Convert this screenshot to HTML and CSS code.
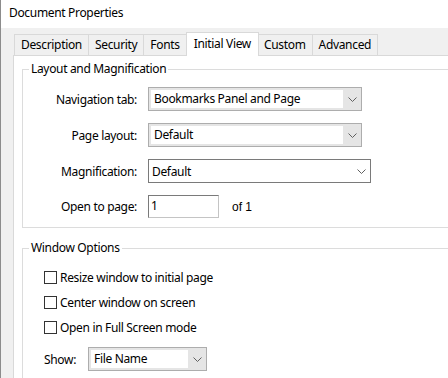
FILE: index.html
```html
<!DOCTYPE html>
<html>
<head>
<meta charset="utf-8">
<link rel="stylesheet" href="styles.css">
</head>
<body>
<div class="window">
  <div class="titlebar">Document Properties</div>
  <div class="client">
    <div class="tabs">
      <div class="tab">Description</div>
      <div class="tab">Security</div>
      <div class="tab">Fonts</div>
      <div class="tab active">Initial View</div>
      <div class="tab">Custom</div>
      <div class="tab">Advanced</div>
    </div>
    <div class="panel">
      <fieldset class="group group-layout">
        <legend>Layout and Magnification</legend>
        <div class="form">
          <div class="label">Navigation tab:</div>
          <div class="combo combo-wide">
            <div class="combo-field">Bookmarks Panel and Page</div>
            <div class="combo-btn"><svg width="9" height="5" viewBox="0 0 9 5"><path d="M0.5 0.5 L4.5 4.5 L8.5 0.5" fill="none" stroke="#606060" stroke-width="1"/></svg></div>
          </div>
          <div class="label">Page layout:</div>
          <div class="combo combo-wide">
            <div class="combo-field">Default</div>
            <div class="combo-btn"><svg width="9" height="5" viewBox="0 0 9 5"><path d="M0.5 0.5 L4.5 4.5 L8.5 0.5" fill="none" stroke="#606060" stroke-width="1"/></svg></div>
          </div>
          <div class="label">Magnification:</div>
          <div class="editcombo">
            <div class="editcombo-field">Default</div>
            <div class="editcombo-btn"><svg width="9" height="5" viewBox="0 0 9 5"><path d="M0.5 0.5 L4.5 4.5 L8.5 0.5" fill="none" stroke="#606060" stroke-width="1"/></svg></div>
          </div>
          <div class="label">Open to page:</div>
          <div class="pagerow">
            <div class="textbox">1</div>
            <span class="of">of 1</span>
          </div>
        </div>
      </fieldset>
      <fieldset class="group group-window">
        <legend>Window Options</legend>
        <div class="checks">
          <label class="check"><span class="box"></span>Resize window to initial page</label>
          <label class="check"><span class="box"></span>Center window on screen</label>
          <label class="check"><span class="box"></span>Open in Full Screen mode</label>
        </div>
        <div class="showrow">
          <span class="showlabel">Show:</span>
          <div class="combo combo-show">
            <div class="combo-field">File Name</div>
            <div class="combo-btn"><svg width="9" height="5" viewBox="0 0 9 5"><path d="M0.5 0.5 L4.5 4.5 L8.5 0.5" fill="none" stroke="#606060" stroke-width="1"/></svg></div>
          </div>
        </div>
      </fieldset>
    </div>
  </div>
</div>
</body>
</html>
```
FILE: styles.css
```css
html, body {
  margin: 0;
  padding: 0;
  width: 448px;
  height: 378px;
  overflow: hidden;
  background: #ffffff;
}
body {
  font-family: "Noto Sans", "Open Sans", sans-serif;
  font-size: 12px;
  letter-spacing: -0.33px;
  color: #000;
}
.window {
  width: 448px;
  height: 378px;
  border-left: 1px solid #8c8c8c;
  box-sizing: border-box;
  display: flex;
  flex-direction: column;
  overflow: hidden;
}
.titlebar {
  height: 28px;
  background: #ffffff;
  padding-left: 8px;
  line-height: 26px;
  font-size: 12px;
  flex: none;
}
.client {
  flex: 1;
  background: #f0f0f0;
  padding: 3px 0 0 12px;
  display: flex;
  flex-direction: column;
  min-height: 0;
}
.tabs {
  display: flex;
  align-items: flex-end;
  height: 24px;
  padding-left: 1px;
  position: relative;
  z-index: 1;
  flex: none;
}
.tab {
  height: 21px;
  box-sizing: border-box;
  border: 1px solid #d9d9d9;
  border-bottom: none;
  border-right: none;
  background: #f0f0f0;
  padding: 0 6px 0 6px;
  line-height: 19px;
}
.tab:nth-child(6) {
  border-right: 1px solid #d9d9d9;
}
.tab.active {
  height: 24px;
  background: #ffffff;
  border: 1px solid #d9d9d9;
  border-bottom: none;
  margin: 0 -1px 0 0;
  padding: 0 7px 0 7px;
  line-height: 21px;
  position: relative;
  top: 1px;
}
.tab.active + .tab {
  border-left: none;
}
.panel {
  flex: 1;
  background: #ffffff;
  border-top: 1px solid #d9d9d9;
  border-left: 1px solid #d9d9d9;
  padding: 6px 0 0 8px;
  min-height: 0;
}
.group {
  margin: 0;
  border: 1px solid #dcdcdc;
  border-right: none;
  padding: 0;
  min-width: 0;
}
.group legend {
  margin-left: 6px;
  padding: 0 2px;
  font-size: 12px;
  line-height: 14px;
}
.group-layout {
  padding: 11px 0 9px 0;
}
.form {
  display: grid;
  grid-template-columns: 114px auto;
  column-gap: 11px;
  row-gap: 12px;
  align-items: center;
}
.label {
  text-align: right;
}
.combo {
  height: 24px;
  box-sizing: border-box;
  border: 1px solid #adadad;
  background: #e5e5e5;
  display: flex;
  padding: 2px 0 2px 2px;
}
.combo-wide {
  width: 214px;
}
.combo-field {
  flex: 1;
  background: #ffffff;
  padding-left: 3px;
  line-height: 18px;
  white-space: nowrap;
  overflow: hidden;
}
.combo-btn {
  width: 18px;
  display: flex;
  align-items: center;
  justify-content: center;
  padding-top: 1px;
}
.editcombo {
  width: 223px;
  height: 24px;
  box-sizing: border-box;
  border: 1px solid #7a7a7a;
  background: #fff;
  display: flex;
  align-items: center;
}
.editcombo-field {
  flex: 1;
  padding-left: 3px;
}
.editcombo-btn {
  width: 18px;
  display: flex;
  align-items: center;
  justify-content: center;
}
.pagerow {
  display: flex;
  align-items: center;
}
.textbox {
  width: 71px;
  height: 23px;
  box-sizing: border-box;
  border-top: 1px solid #7a7a7a;
  border-left: 1px solid #7a7a7a;
  border-right: 1px solid #c4c4c4;
  border-bottom: 1px solid #c4c4c4;
  padding-left: 2px;
  line-height: 20px;
}
.of {
  margin-left: 13px;
  font-family: "Liberation Sans", Arial, sans-serif;
  font-size: 12px;
  letter-spacing: 0;
}
.group-window {
  margin-top: 13px;
  padding: 15px 0 40px 0;
}
.checks {
  display: flex;
  flex-direction: column;
  row-gap: 10px;
  padding-left: 21px;
}
.check {
  display: flex;
  align-items: center;
  height: 15px;
}
.box {
  width: 13px;
  height: 13px;
  box-sizing: border-box;
  border: 1px solid #333333;
  background: #fff;
  margin-right: 3px;
  flex: none;
}
.showrow {
  display: flex;
  align-items: center;
  padding-left: 21px;
  margin-top: 12px;
}
.showlabel {
  width: 44px;
}
.combo-show {
  width: 119px;
}
```
